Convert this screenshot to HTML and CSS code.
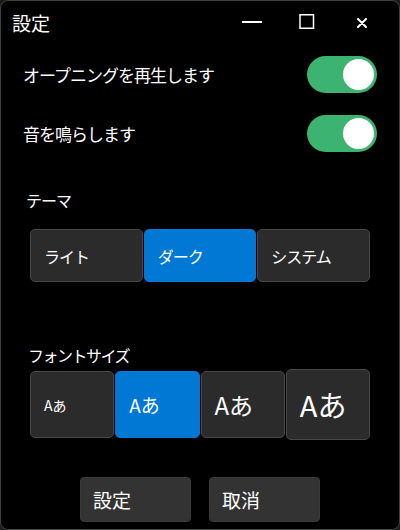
FILE: index.html
```html
<!DOCTYPE html>
<html lang="ja">
<head>
<meta charset="utf-8">
<title>設定</title>
<link rel="stylesheet" href="styles.css">
</head>
<body>
<div class="window">
  <header class="titlebar">
    <span class="title">設定</span>
    <div class="controls">
      <span class="ctl"><svg width="20" height="20" viewBox="0 0 20 20"><rect x="0" y="9" width="20" height="2" fill="#fff"/></svg></span>
      <span class="ctl"><svg width="16" height="16" viewBox="0 0 16 16"><rect x="1" y="0.75" width="13.5" height="13.5" fill="none" stroke="#fff" stroke-width="1.5"/></svg></span>
      <span class="ctl ctl-close"><svg width="10" height="10" viewBox="0 0 10 10"><path d="M1 1 L9 9 M9 1 L1 9" stroke="#fff" stroke-width="2" stroke-linecap="round"/></svg></span>
    </div>
  </header>

  <div class="row row-first">
    <span class="row-label">オープニングを再生します</span>
    <span class="toggle"><span class="knob"></span></span>
  </div>
  <div class="row row-second">
    <span class="row-label">音を鳴らします</span>
    <span class="toggle"><span class="knob"></span></span>
  </div>

  <div class="section-label theme-label">テーマ</div>
  <div class="seg">
    <div class="btn">ライト</div>
    <div class="btn active">ダーク</div>
    <div class="btn">システム</div>
  </div>

  <div class="section-label font-label">フォントサイズ</div>
  <div class="sizes">
    <div class="btn size s1">Aあ</div>
    <div class="btn size s2 active">Aあ</div>
    <div class="btn size s3">Aあ</div>
    <div class="btn size s4">Aあ</div>
  </div>

  <div class="actions">
    <div class="action">設定</div>
    <div class="action">取消</div>
  </div>
</div>
</body>
</html>
```
FILE: styles.css
```css
html, body {
  margin: 0;
  padding: 0;
  background: #1c1c1c;
}

.window {
  width: 400px;
  height: 530px;
  box-sizing: border-box;
  border: 1px solid #3f3f3f;
  border-radius: 8px;
  background: #000;
  color: #fff;
  display: flex;
  flex-direction: column;
  font-family: "Noto Sans CJK JP", "Noto Sans", sans-serif;
  overflow: hidden;
}

.titlebar {
  height: 42px;
  display: flex;
  align-items: center;
  padding: 0 10px 0 11px;
}

.title {
  flex: 1;
  font-size: 19px;
  line-height: 1;
}

.controls {
  display: flex;
  height: 42px;
}

.ctl {
  width: 55px;
  display: flex;
  align-items: center;
  justify-content: center;
}

.ctl-close {
  padding-top: 2px;
}

.ctl svg {
  display: block;
}

.row {
  height: 37px;
  display: flex;
  align-items: center;
  justify-content: space-between;
  padding: 0 22px;
}

.row-first {
  margin-top: 13px;
}

.row-second {
  margin-top: 22px;
}

.row-label {
  font-size: 17px;
  letter-spacing: -1px;
  line-height: 1;
}

.toggle {
  width: 70px;
  height: 37px;
  box-sizing: border-box;
  border-radius: 19px;
  background: #3cb371;
  display: flex;
  align-items: center;
  justify-content: flex-end;
  padding-right: 3px;
}

.knob {
  width: 31px;
  height: 31px;
  border-radius: 50%;
  background: #fff;
}

.section-label {
  font-size: 16px;
  line-height: 22px;
  letter-spacing: -1px;
  padding-left: 25px;
}

.theme-label {
  margin-top: 37px;
}

.font-label {
  margin-top: 62px;
  padding-left: 27px;
  letter-spacing: -1.5px;
}

.seg {
  display: grid;
  grid-template-columns: repeat(3, 1fr);
  gap: 1px;
  height: 53px;
  margin: 18px 29px 0;
}

.btn {
  box-sizing: border-box;
  background: #2b2b2b;
  border: 1px solid #474747;
  border-radius: 5px;
  display: flex;
  align-items: center;
  padding-left: 13px;
  font-size: 16px;
  letter-spacing: -1px;
  line-height: 1;
}

.btn.active {
  background: #0078d4;
  border-color: #0078d4;
}

.sizes {
  display: grid;
  grid-template-columns: repeat(4, 1fr);
  gap: 1px;
  align-items: center;
  margin: 3px 29px 0;
}

.size {
  height: 67px;
  letter-spacing: 0;
}

.s1 { font-size: 14px; }
.s2 { font-size: 19px; }
.s3 { font-size: 24px; }
.s4 { font-size: 29px; height: 71px; }

.actions {
  display: flex;
  justify-content: center;
  gap: 18px;
  margin-top: 37px;
}

.action {
  width: 111px;
  height: 45px;
  box-sizing: border-box;
  background: #333;
  border: 1px solid #3a3a3a;
  border-radius: 4px;
  display: flex;
  align-items: center;
  padding-left: 12px;
  font-size: 19px;
  line-height: 1;
}
```
